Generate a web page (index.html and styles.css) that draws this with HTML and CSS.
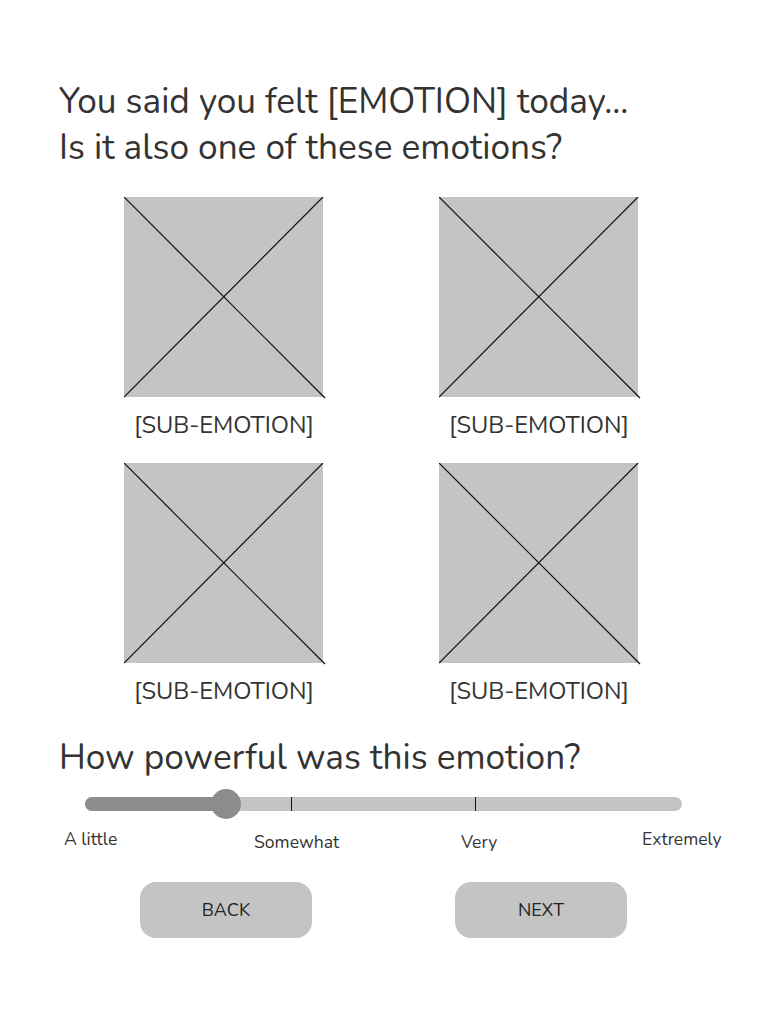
FILE: index.html
```html
<!DOCTYPE html>
<html>
<head>
<meta charset="utf-8">
<link rel="stylesheet" href="styles.css">
</head>
<body>
<main class="page">
  <h1 class="title">You said you felt [EMOTION] today...<br>Is it also one of these emotions?</h1>
  <div class="grid">
    <div class="option">
      <svg class="ph" width="202" height="202" viewBox="0 0 202 202"><rect x="0" y="0" width="199" height="200" fill="#c4c4c4"/><line x1="0" y1="0" x2="201" y2="201" stroke="#111" stroke-width="1.2"/><line x1="0" y1="200" x2="199" y2="0" stroke="#111" stroke-width="1.2"/></svg>
      <div class="label">[SUB-EMOTION]</div>
    </div>
    <div class="option">
      <svg class="ph" width="202" height="202" viewBox="0 0 202 202"><rect x="0" y="0" width="199" height="200" fill="#c4c4c4"/><line x1="0" y1="0" x2="201" y2="201" stroke="#111" stroke-width="1.2"/><line x1="0" y1="200" x2="199" y2="0" stroke="#111" stroke-width="1.2"/></svg>
      <div class="label">[SUB-EMOTION]</div>
    </div>
    <div class="option">
      <svg class="ph" width="202" height="202" viewBox="0 0 202 202"><rect x="0" y="0" width="199" height="200" fill="#c4c4c4"/><line x1="0" y1="0" x2="201" y2="201" stroke="#111" stroke-width="1.2"/><line x1="0" y1="200" x2="199" y2="0" stroke="#111" stroke-width="1.2"/></svg>
      <div class="label">[SUB-EMOTION]</div>
    </div>
    <div class="option">
      <svg class="ph" width="202" height="202" viewBox="0 0 202 202"><rect x="0" y="0" width="199" height="200" fill="#c4c4c4"/><line x1="0" y1="0" x2="201" y2="201" stroke="#111" stroke-width="1.2"/><line x1="0" y1="200" x2="199" y2="0" stroke="#111" stroke-width="1.2"/></svg>
      <div class="label">[SUB-EMOTION]</div>
    </div>
  </div>
  <h2 class="question">How powerful was this emotion?</h2>
  <div class="slider">
    <div class="track">
      <div class="fill"></div>
      <div class="thumb"></div>
      <div class="tick tick1"></div>
      <div class="tick tick2"></div>
    </div>
    <div class="scale">
      <span class="s s1">A little</span>
      <span class="s s2">Somewhat</span>
      <span class="s s3">Very</span>
      <span class="s s4">Extremely</span>
    </div>
  </div>
  <div class="buttons">
    <button class="btn">BACK</button>
    <button class="btn">NEXT</button>
  </div>
</main>
</body>
</html>
```

FILE: styles.css
```css
html, body {
  margin: 0;
  padding: 0;
  background: #fff;
}
body {
  font-family: "Nunito", "Lato", "Open Sans", sans-serif;
  color: #333;
  width: 768px;
  height: 1024px;
}
.page {
  padding: 78px 0 0 59px;
}
.title {
  margin: 0;
  font-weight: 400;
  font-size: 35.2px;
  line-height: 46px;
  color: #333;
}
.grid {
  display: grid;
  grid-template-columns: 200px 200px;
  column-gap: 115px;
  row-gap: 23px;
  margin: 27px 0 0 65px;
}
.option {
  display: flex;
  flex-direction: column;
  align-items: flex-start;
}
.ph {
  display: block;
}
.label {
  width: 200px;
  text-align: center;
  font-size: 23.7px;
  line-height: 30px;
  margin-top: 11px;
  color: #333;
}
.question {
  margin: 28px 0 0 0;
  font-weight: 400;
  font-size: 35.2px;
  line-height: 46px;
  color: #333;
}
.slider {
  margin: 17px 0 0 26px;
  width: 597px;
}
.track {
  position: relative;
  height: 14px;
  border-radius: 7px;
  background: #c4c4c4;
}
.fill {
  position: absolute;
  left: 0;
  top: 0;
  height: 14px;
  width: 141px;
  border-radius: 7px;
  background: #8c8c8c;
}
.thumb {
  position: absolute;
  left: 126px;
  top: -8px;
  width: 30px;
  height: 30px;
  border-radius: 50%;
  background: #8c8c8c;
}
.tick {
  position: absolute;
  top: 0;
  width: 1px;
  height: 14px;
  background: #111;
}
.tick1 { left: 206px; }
.tick2 { left: 390px; }
.scale {
  position: relative;
  height: 40px;
  font-size: 17.6px;
  color: #333;
}
.s {
  position: absolute;
  white-space: nowrap;
}
.s1 { left: -21px; top: 16px; }
.s2 { left: 169px; top: 19px; }
.s3 { left: 376px; top: 19px; }
.s4 { left: 557px; top: 16px; }
.buttons {
  display: flex;
  gap: 143px;
  margin: 31px 0 0 81px;
}
.btn {
  width: 172px;
  height: 56px;
  border: none;
  border-radius: 16px;
  background: #c4c4c4;
  font-family: inherit;
  font-size: 18px;
  color: #222;
  padding: 0;
}
```
